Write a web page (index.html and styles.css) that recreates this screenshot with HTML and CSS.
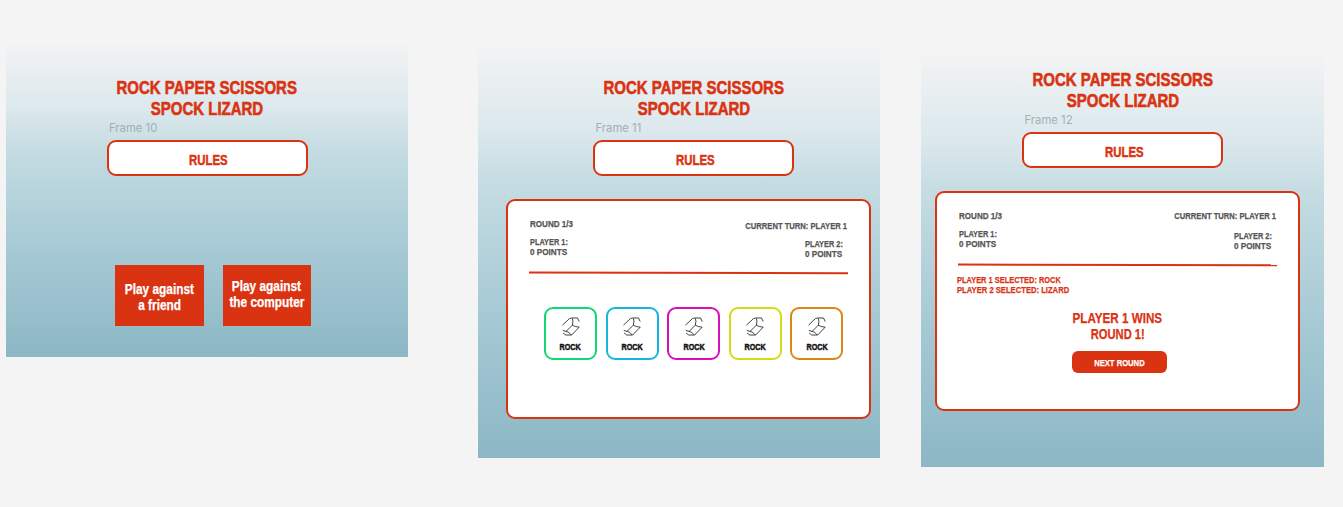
FILE: index.html
```html
<!DOCTYPE html>
<html lang="en">
<head>
<meta charset="utf-8">
<title>Rock Paper Scissors Spock Lizard</title>
<link rel="stylesheet" href="styles.css">
</head>
<body>
<svg class="defs" width="0" height="0" aria-hidden="true">
  <symbol id="rock" viewBox="79 52 54 58">
    <path d="M80 77 101 57 108 55 126 55 131 66M110 56 112 65 110 77 119 81 131 83 108 107 90 107 82 101M81 93 91 96 99 99 107 107M110 77 91 96"/>
  </symbol>
</svg>
<main class="board">
  <section class="frame start">
    <header class="head">
      <h1 class="title"><span>ROCK PAPER SCISSORS</span><span>SPOCK LIZARD</span></h1>
      <div class="label">Frame 10</div>
      <div class="rules"><span>RULES</span></div>
    </header>
    <div class="modes">
      <div class="mode friend"><span>Play against</span><span>a friend</span></div>
      <div class="mode computer"><span>Play against</span><span>the computer</span></div>
    </div>
  </section>

  <section class="frame play">
    <header class="head">
      <h1 class="title"><span>ROCK PAPER SCISSORS</span><span>SPOCK LIZARD</span></h1>
      <div class="label">Frame 11</div>
      <div class="rules"><span>RULES</span></div>
    </header>
    <div class="panel">
      <div class="status">
        <div class="left"><span class="round">ROUND 1/3</span><span class="player">PLAYER 1:</span><span class="points">0 POINTS</span></div>
        <div class="right"><span class="turn">CURRENT TURN: PLAYER 1</span>
          <div class="score"><span class="player">PLAYER 2:</span><span class="points">0 POINTS</span></div></div>
      </div>
      <svg class="rule" viewBox="0 0 319 4"><path d="M0 1.5 319 2.2"/></svg>
      <div class="cards">
        <div class="card green"><svg class="icon"><use href="#rock"/></svg><span>ROCK</span></div>
        <div class="card blue"><svg class="icon"><use href="#rock"/></svg><span>ROCK</span></div>
        <div class="card pink"><svg class="icon"><use href="#rock"/></svg><span>ROCK</span></div>
        <div class="card yellow"><svg class="icon"><use href="#rock"/></svg><span>ROCK</span></div>
        <div class="card orange"><svg class="icon"><use href="#rock"/></svg><span>ROCK</span></div>
      </div>
    </div>
  </section>

  <section class="frame result">
    <header class="head">
      <h1 class="title"><span>ROCK PAPER SCISSORS</span><span>SPOCK LIZARD</span></h1>
      <div class="label">Frame 12</div>
      <div class="rules"><span>RULES</span></div>
    </header>
    <div class="panel">
      <div class="status">
        <div class="left"><span class="round">ROUND 1/3</span><span class="player">PLAYER 1:</span><span class="points">0 POINTS</span></div>
        <div class="right"><span class="turn">CURRENT TURN: PLAYER 1</span>
          <div class="score"><span class="player">PLAYER 2:</span><span class="points">0 POINTS</span></div></div>
      </div>
      <svg class="rule" viewBox="0 0 319 4"><path d="M0 1.5 319 2.2"/></svg>
      <div class="picks"><span class="one">PLAYER 1 SELECTED: ROCK</span><span class="two">PLAYER 2 SELECTED: LIZARD</span></div>
      <div class="outcome">
        <div class="winner"><span class="who">PLAYER 1 WINS</span><span class="which">ROUND 1!</span></div>
        <div class="next"><span>NEXT ROUND</span></div>
      </div>
    </div>
  </section>
</main>
</body>
</html>
```
FILE: styles.css
```css
* { box-sizing: border-box; }

body {
  margin: 0;
  background: #f4f4f4;
  font-family: "Liberation Sans", sans-serif;
  font-weight: 700;
  overflow: hidden;
}

.defs { display: block; height: 0; }

/* Condensed display lettering */
span {
  display: block;
  white-space: nowrap;
  transform: scaleX(var(--fit, 1));
  -webkit-text-stroke: 0.25px currentColor;
}

.board { display: flex; align-items: flex-start; height: 507px; padding-left: 6px; }

.frame {
  flex: none;
  display: flex;
  flex-direction: column;
  align-items: flex-start;
  width: 402px;
  background: linear-gradient(180deg, #f4f4f4 0%, #dbe8ed 22%, #c5dce2 34%, #b7d4dc 48%, #a3c8d3 69%, #8db7c5 100%);
}
.start { height: 317px; margin-top: 40px; padding-top: 37px; }
.play { height: 418px; margin: 40px 0 0 70px; padding-top: 37px; }
.result { width: 403px; height: 418px; margin: 49px 0 0 41px; padding-top: 20px; }

.head { width: 201px; margin-left: 100.5px; }
.play .head { margin-left: 115px; }
.result .head { margin-left: 101px; }

.title {
  display: flex;
  flex-direction: column;
  align-items: center;
  margin: 0;
  font-size: 18.4px;
  line-height: 21px;
  color: #da3312;
  --fit: 0.815;
}
.title span { -webkit-text-stroke-width: 0.6px; }
.label {
  margin: 2px 0 5px 2.5px;
  font: 400 11.3px/14px Inter, sans-serif;
  color: #a2b0b5;
}
.rules {
  display: flex;
  justify-content: center;
  width: 201px;
  height: 36px;
  padding: 3px 0 0 3px;
  border: 2px solid #da3312;
  border-radius: 9px;
  background: #fff;
  color: #da3312;
  font-size: 14.4px;
  line-height: 30px;
  --fit: 0.79;
}
.rules span { -webkit-text-stroke-width: 0.5px; }

.modes { display: flex; gap: 19px; margin: 89px 0 0 109px; }
.mode {
  display: flex;
  flex-direction: column;
  align-items: center;
  width: 88.5px;
  height: 61px;
  background: #da3312;
  color: #fff;
  font-size: 14.2px;
  line-height: 16px;
  --fit: 0.835;
}
.friend { padding-top: 15.5px; }
.computer { padding-top: 12.5px; }

.panel {
  width: 365px;
  height: 220px;
  margin: 23px 0 0 28px;
  padding: 18px 21px 0;
  border: 2px solid #da3312;
  border-radius: 9px;
  background: #fff;
}
.result .panel { margin-left: 14px; }

.status {
  display: flex;
  justify-content: space-between;
  height: 52px;
  padding: 0 1px;
  font-size: 9.6px;
  line-height: 10px;
  color: #555;
}
.status .left { width: 60px; }
.left span, .score span, .picks span { transform-origin: left; }
.round { --fit: 0.84; margin-bottom: 8px; }
.player { --fit: 0.77; }
.points { --fit: 0.85; }
.right { display: flex; flex-direction: column; align-items: flex-end; padding-top: 2px; }
.turn { --fit: 0.795; transform-origin: right; }
.score { width: 42px; margin-top: 8px; }
.result .right { padding-top: 0; }
.result .score { margin-top: 10px; }

.rule { display: block; width: 319px; height: 4px; }
.rule path { fill: none; stroke: #da3312; stroke-width: 2; }

.cards { display: flex; gap: 8.6px; margin: 32px 0 0 15px; }
.card {
  flex: none;
  display: flex;
  flex-direction: column;
  align-items: center;
  width: 53px;
  height: 53px;
  padding-top: 8px;
  border: 2px solid currentColor;
  border-radius: 9px;
  font-size: 9.6px;
  line-height: 10px;
  --fit: 0.75;
}
.card span { margin-top: 6px; color: #111; -webkit-text-stroke: 0.5px #111; }
.icon { width: 18px; height: 19px; fill: none; stroke: #222; stroke-width: 2.6; }
.green { color: #12d873; }
.blue { color: #14b6df; }
.pink { color: #db0ebb; }
.yellow { color: #d5dc13; }
.orange { color: #dc8714; }

.picks { margin: 8px 0 0 -1px; font-size: 9.6px; line-height: 10px; color: #da3312; }
.one { --fit: 0.775; }
.two { --fit: 0.796; }

.outcome { display: flex; flex-direction: column; align-items: center; }
.winner {
  display: flex;
  flex-direction: column;
  align-items: center;
  margin-top: 15px;
  color: #da3312;
  font-size: 14.4px;
  line-height: 16px;
}
.who { --fit: 0.81; }
.which { --fit: 0.776; }
.next {
  display: flex;
  justify-content: center;
  width: 95px;
  height: 22px;
  margin: 9px 0 0 3px;
  border-radius: 6px;
  background: #da3312;
  color: #fff;
  font-size: 9.8px;
  line-height: 24px;
  --fit: 0.78;
}
```
